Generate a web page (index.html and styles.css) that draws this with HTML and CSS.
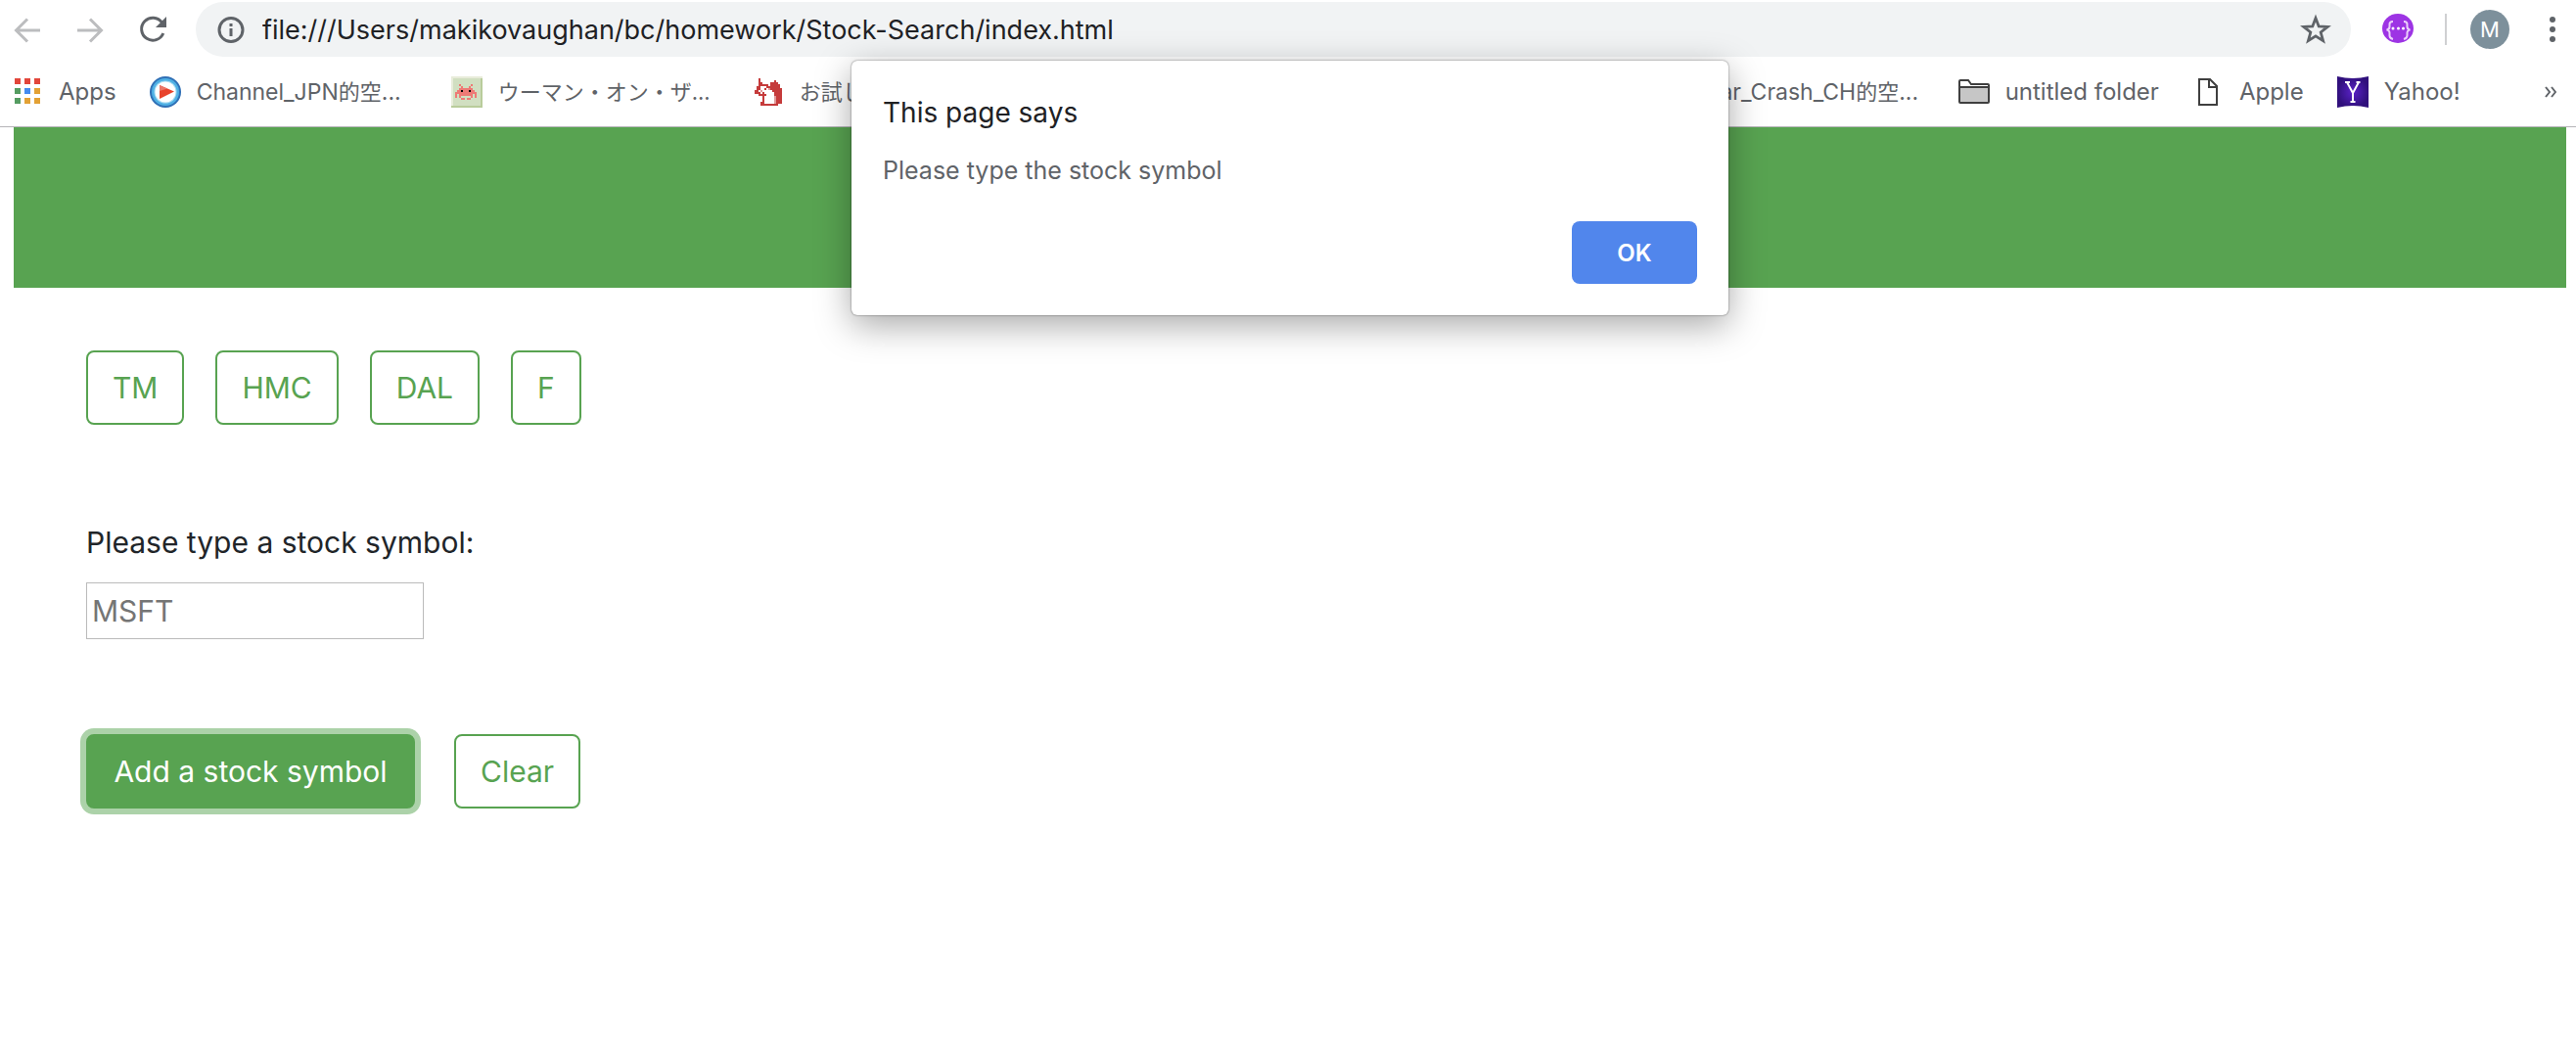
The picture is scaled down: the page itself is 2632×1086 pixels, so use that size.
FILE: index.html
```
<!DOCTYPE html>
<html lang="en">
<head>
<meta charset="utf-8">
<meta name="viewport" content="width=device-width, initial-scale=1">
<title>Stock Search</title>
<link rel="stylesheet" href="styles.css">
</head>
<body>
<header class="chrome">
  <div class="toolbar">
    <nav class="nav-buttons" aria-label="History">
      <button class="icon-button faded" type="button" aria-label="Back">
        <svg class="icon" viewBox="0 0 32 32"><path d="M29 17H5M16 5.500 4.500 17 16 28.500" fill="none" stroke="currentColor" stroke-width="3"/></svg>
      </button>
      <button class="icon-button faded" type="button" aria-label="Forward">
        <svg class="icon" viewBox="0 0 32 32"><path d="M3 17h24M16 5.500 27.500 17 16 28.500" fill="none" stroke="currentColor" stroke-width="3"/></svg>
      </button>
      <button class="icon-button" type="button" aria-label="Reload">
        <svg class="icon" viewBox="0 0 32 32"><path d="M25.500 9A11.500 11.500 0 1 0 26.800 20" fill="none" stroke="currentColor" stroke-width="3"/><path d="M30 3v11H19z" fill="currentColor"/></svg>
      </button>
    </nav>
    <div class="address">
      <svg class="icon" viewBox="0 0 32 32"><circle cx="16" cy="16.500" r="12" fill="none" stroke="currentColor" stroke-width="3"/><path d="M14.500 10h3v3h-3zM14.500 15h3v8h-3z" fill="currentColor"/></svg>
      <input class="address-input" type="text" aria-label="Address" value="file:///Users/makikovaughan/bc/homework/Stock-Search/index.html">
      <button class="icon-button" type="button" aria-label="Bookmark this page">
        <svg class="icon" viewBox="0 0 32 32"><path d="M16 4.500 19.200 13l9 .4-7 5.600 2.400 8.700L16 22.800l-7.600 4.900 2.400-8.700-7-5.600 9-.4z" fill="none" stroke="currentColor" stroke-width="2.800"/></svg>
      </button>
    </div>
    <button class="icon-button" type="button" aria-label="Extension">
      <svg class="icon" viewBox="0 0 32 32"><ellipse cx="16" cy="15" rx="16" ry="15" fill="#9d34e4"/><g fill="none" stroke="#ecd0fb" stroke-width="2"><path d="M11 8Q7 8 7.500 12q.5 4-3 4.500Q8 17 7.500 21q-.5 4 3.500 5M22 8q4 0 3.500 4-.5 4 3 4.500Q25 17 25.500 21q.5 4-3.500 5"/></g><g fill="#fff"><circle cx="11" cy="15" r="1.500"/><circle cx="16.500" cy="15" r="1.500"/><circle cx="21.500" cy="15" r="1.500"/></g></svg>
    </button>
    <span class="divider"></span>
    <button class="avatar" type="button" aria-label="Profile">M</button>
    <button class="icon-button" type="button" aria-label="Menu">
      <svg class="icon" viewBox="0 0 32 32" fill="currentColor"><circle cx="16" cy="6" r="3"/><circle cx="16" cy="16" r="3"/><circle cx="16" cy="26" r="3"/></svg>
    </button>
  </div>
  <nav class="bookmarks" aria-label="Bookmarks">
    <a class="bookmark" href="#">
      <svg class="icon" viewBox="0 0 32 32"><path fill="#e2463b" d="M3 2h6v6H3zM13 2h6v6h-6zM23 2h6v6h-6z"/><path fill="#559c61" d="M3 12h6v6H3zM3 22h6v6H3z"/><path fill="#448bf0" d="M13 12h6v6h-6z"/><path fill="#e3a134" d="M23 12h6v6h-6zM13 22h6v6h-6zM23 22h6v6h-6z"/></svg>
      <span>Apps</span>
    </a>
    <a class="bookmark" href="#">
      <svg class="icon" viewBox="0 0 32 32"><circle cx="16" cy="16" r="16" fill="#2f6fb5"/><circle cx="16" cy="16" r="14" fill="#4fb0e4"/><circle cx="16" cy="16" r="11.500" fill="#a9dcf3"/><circle cx="16" cy="16" r="10.500" fill="#fff"/><path d="M10 9 25 15.500 10 23z" fill="#e8432b"/><path d="M10 9 18 12.500 10 15z" fill="#ea7669"/></svg>
      <span class="clipped">Channel_JPN<span class="cjk">的空</span>...</span>
    </a>
    <a class="bookmark" href="#">
      <svg class="icon" viewBox="0 0 32 32" shape-rendering="crispEdges"><path fill="#b9cc9b" d="M0 0h32v32H0z"/><path fill="#e8ecda" d="M0 0h32v2H2v28H0z"/><path fill="#d1dfc1" d="M2 2h28v28H2z"/><path fill="#ee7a76" d="M8 8h2v2h2v2h6v-2h2V8h2v2h-2v2h2v2h2v2h2v6h-2v-4h-2v4h-2v-2H10v2H8v-4H6v4H4v-6h2v-2h2v-2h2v-2H8zM10 22h4v2h-4zM16 22h4v2h-4z"/><path d="M10 14h2v2h-2zM18 14h2v2h-2z"/></svg>
      <span class="clipped cjk">ウーマン・オン・ザ...</span>
    </a>
    <a class="bookmark" href="#">
      <svg class="icon" viewBox="0 0 32 32" shape-rendering="crispEdges"><path fill="#c53b3b" d="M6 2h2v4h2v2h6v2h2V6h4V4h2v2h2v2h2v4h2v16h-4v2H8v-4h2v-6H6v-2H2v-4h2v-4h2z"/><path fill="#fff" d="M8 10h6v2h4v2h2v2h2v12H12v-8h2v-2H6v-4h2z"/><path fill="#c53b3b" d="M12 12h2v2h-2zM6 16h2v2H6zM10 16h2v2h-2z"/><path fill="#e09a9a" d="M8 14h2v2H8zM16 12h2v2h-2zM22 20h2v8h-2z"/></svg>
      <span class="clipped cjk">お試し</span>
    </a>
    <a class="bookmark under-dialog" href="#">
      <span class="clipped">Car_Crash_CH<span class="cjk">的空</span>...</span>
    </a>
    <a class="bookmark" href="#">
      <svg class="icon" viewBox="0 0 32 32"><path d="M1 10h30v17H1z" fill="#c6c6c6"/><path d="M1 26V5q0-1 1-1h8l3 4h17q1 0 1 1v17q0 1-1 1H2q-1 0-1-1zM1 11h30" fill="none" stroke="#3f3f3f" stroke-width="2"/></svg>
      <span>untitled folder</span>
    </a>
    <a class="bookmark" href="#">
      <svg class="icon" viewBox="0 0 32 32"><path d="M7 3h11l7 7v19H7zM17 3v8h8" fill="none" stroke="#3f3f3f" stroke-width="2"/></svg>
      <span>Apple</span>
    </a>
    <a class="bookmark" href="#">
      <svg class="icon" viewBox="0 0 32 32"><defs><radialGradient id="violet"><stop offset="0" stop-color="#5a22c8"/><stop offset="1" stop-color="#30107c"/></radialGradient></defs><path d="M0 0q16 4 32 0v32q-16-4-32 0z" fill="url(#violet)"/><path d="m10 6 6 11v9M22 6l-6 11M8 6h5M19.500 6h4M13.500 26h5" fill="none" stroke="#fff" stroke-width="2"/></svg>
      <span>Yahoo!</span>
    </a>
    <button class="more" type="button" aria-label="More bookmarks">
      <svg class="more-icon" viewBox="0 0 12 12"><path d="m1 1 4 5-4 5M7 1l4 5-4 5" fill="none" stroke="currentColor" stroke-width="2"/></svg>
    </button>
  </nav>
</header>

<main class="page">
  <div class="banner"></div>
  <div class="content">
    <div class="symbols">
      <button class="btn" type="button">TM</button>
      <button class="btn" type="button">HMC</button>
      <button class="btn" type="button">DAL</button>
      <button class="btn" type="button">F</button>
    </div>
    <form class="stock-form">
      <label class="field-label" for="symbol">Please type a stock symbol:</label>
      <input class="field" id="symbol" type="text" placeholder="MSFT">
      <div class="actions">
        <button class="btn btn-primary" type="button">Add a stock symbol</button>
        <button class="btn" type="button">Clear</button>
      </div>
    </form>
  </div>
</main>

<div class="dialog" role="alertdialog" aria-labelledby="dialog-title" aria-describedby="dialog-text">
  <h1 class="dialog-title" id="dialog-title">This page says</h1>
  <p class="dialog-text" id="dialog-text">Please type the stock symbol</p>
  <button class="dialog-ok" type="button">OK</button>
</div>
</body>
</html>
```
FILE: styles.css
```
* {
  box-sizing: border-box;
}

body {
  margin: 0;
  background: #fff;
  color: #212529;
  font-family: Inter, "Noto Sans CJK JP", sans-serif;
  font-size: 30px;
}

button,
input {
  margin: 0;
  font-family: inherit;
}

/* Browser chrome */
.chrome {
  border-bottom: 1px solid #b5b4b8;
  color: #5f6368;
}

.toolbar {
  display: flex;
  align-items: center;
  padding: 2px 8px 0 12px;
}

.nav-buttons {
  display: flex;
  gap: 32px;
  margin-right: 28px;
}

.icon-button {
  display: block;
  flex: none;
  padding: 0;
  border: 0;
  background: none;
  color: inherit;
}

.faded {
  color: #bcbdbf;
}

.icon {
  display: block;
  flex: none;
  width: 32px;
  height: 32px;
}

.address {
  display: flex;
  flex: 1;
  align-items: center;
  gap: 16px;
  height: 56px;
  margin-right: 32px;
  padding: 0 20px;
  border-radius: 28px;
  background: #f1f3f4;
}

.address-input {
  flex: 1;
  min-width: 0;
  padding: 0;
  border: 0;
  outline: 0;
  background: none;
  color: #202124;
  font-size: 27px;
}

.divider {
  width: 2px;
  height: 32px;
  margin: 0 24px 0 32px;
  background: #cfd0d2;
}

.avatar {
  width: 40px;
  height: 40px;
  margin-right: 28px;
  padding: 0;
  border: 0;
  border-radius: 50%;
  background: #7d909b;
  color: #fff;
  font-size: 22px;
}

.bookmarks {
  display: flex;
  align-items: center;
  gap: 34px;
  padding: 20px 20px 19px 12px;
}

.bookmark {
  display: flex;
  flex: none;
  align-items: center;
  gap: 16px;
  color: inherit;
  font-size: 24px;
  line-height: 32px;
  text-decoration: none;
  white-space: nowrap;
}

.clipped {
  width: 226px;
  overflow: hidden;
  font-size: 23px;
}

.cjk {
  font-size: 22px;
}

/* Leaves room for the bookmarks covered by the dialog */
.under-dialog {
  margin-left: 664px;
}

.more {
  margin-left: auto;
  padding: 0;
  border: 0;
  background: none;
  color: inherit;
}

.more-icon {
  display: block;
  width: 12px;
  height: 12px;
}

/* Page */
.page {
  padding: 0 10px 0 14px;
}

.banner {
  height: 164px;
  background: #58a351;
}

.content {
  padding: 64px 74px;
}

.symbols,
.actions {
  display: flex;
  flex-wrap: wrap;
  gap: 32px;
}

.btn {
  height: 76px;
  padding: 0 25px;
  border: 2px solid #58a351;
  border-radius: 8px;
  background: #fff;
  color: #58a351;
  font-size: 30px;
}

.btn-primary {
  min-width: 336px;
  background: #58a351;
  color: #fff;
  box-shadow: 0 0 0 6px #acd2a9;
}

.stock-form {
  margin-top: 96px;
}

.field-label {
  display: block;
  margin-bottom: 17px;
  line-height: 48px;
}

.field {
  display: block;
  width: 345px;
  height: 58px;
  padding: 0 5px;
  border: 1px solid #bbb;
  font-size: 30px;
}

.field::placeholder {
  color: #757575;
}

.actions {
  gap: 40px;
  margin-top: 97px;
}

/* Alert */
.dialog {
  position: absolute;
  top: 62px;
  left: calc(50% - 446px);
  display: flex;
  flex-direction: column;
  width: 896px;
  padding: 33px 32px 32px;
  border-radius: 6px;
  background: #fff;
  box-shadow: 0 0 2px rgba(0, 0, 0, .6), 0 10px 36px rgba(0, 0, 0, .35);
}

.dialog-title {
  margin: 0;
  color: #202124;
  font-size: 28px;
  font-weight: 400;
  line-height: 40px;
}

.dialog-text {
  margin: 23px 0 36px;
  color: #5f6368;
  font-size: 25px;
  line-height: 32px;
}

.dialog-ok {
  align-self: flex-end;
  width: 128px;
  height: 64px;
  border: 0;
  border-radius: 8px;
  background: #5186ec;
  color: #fff;
  font-size: 24px;
  font-weight: 600;
}
```
